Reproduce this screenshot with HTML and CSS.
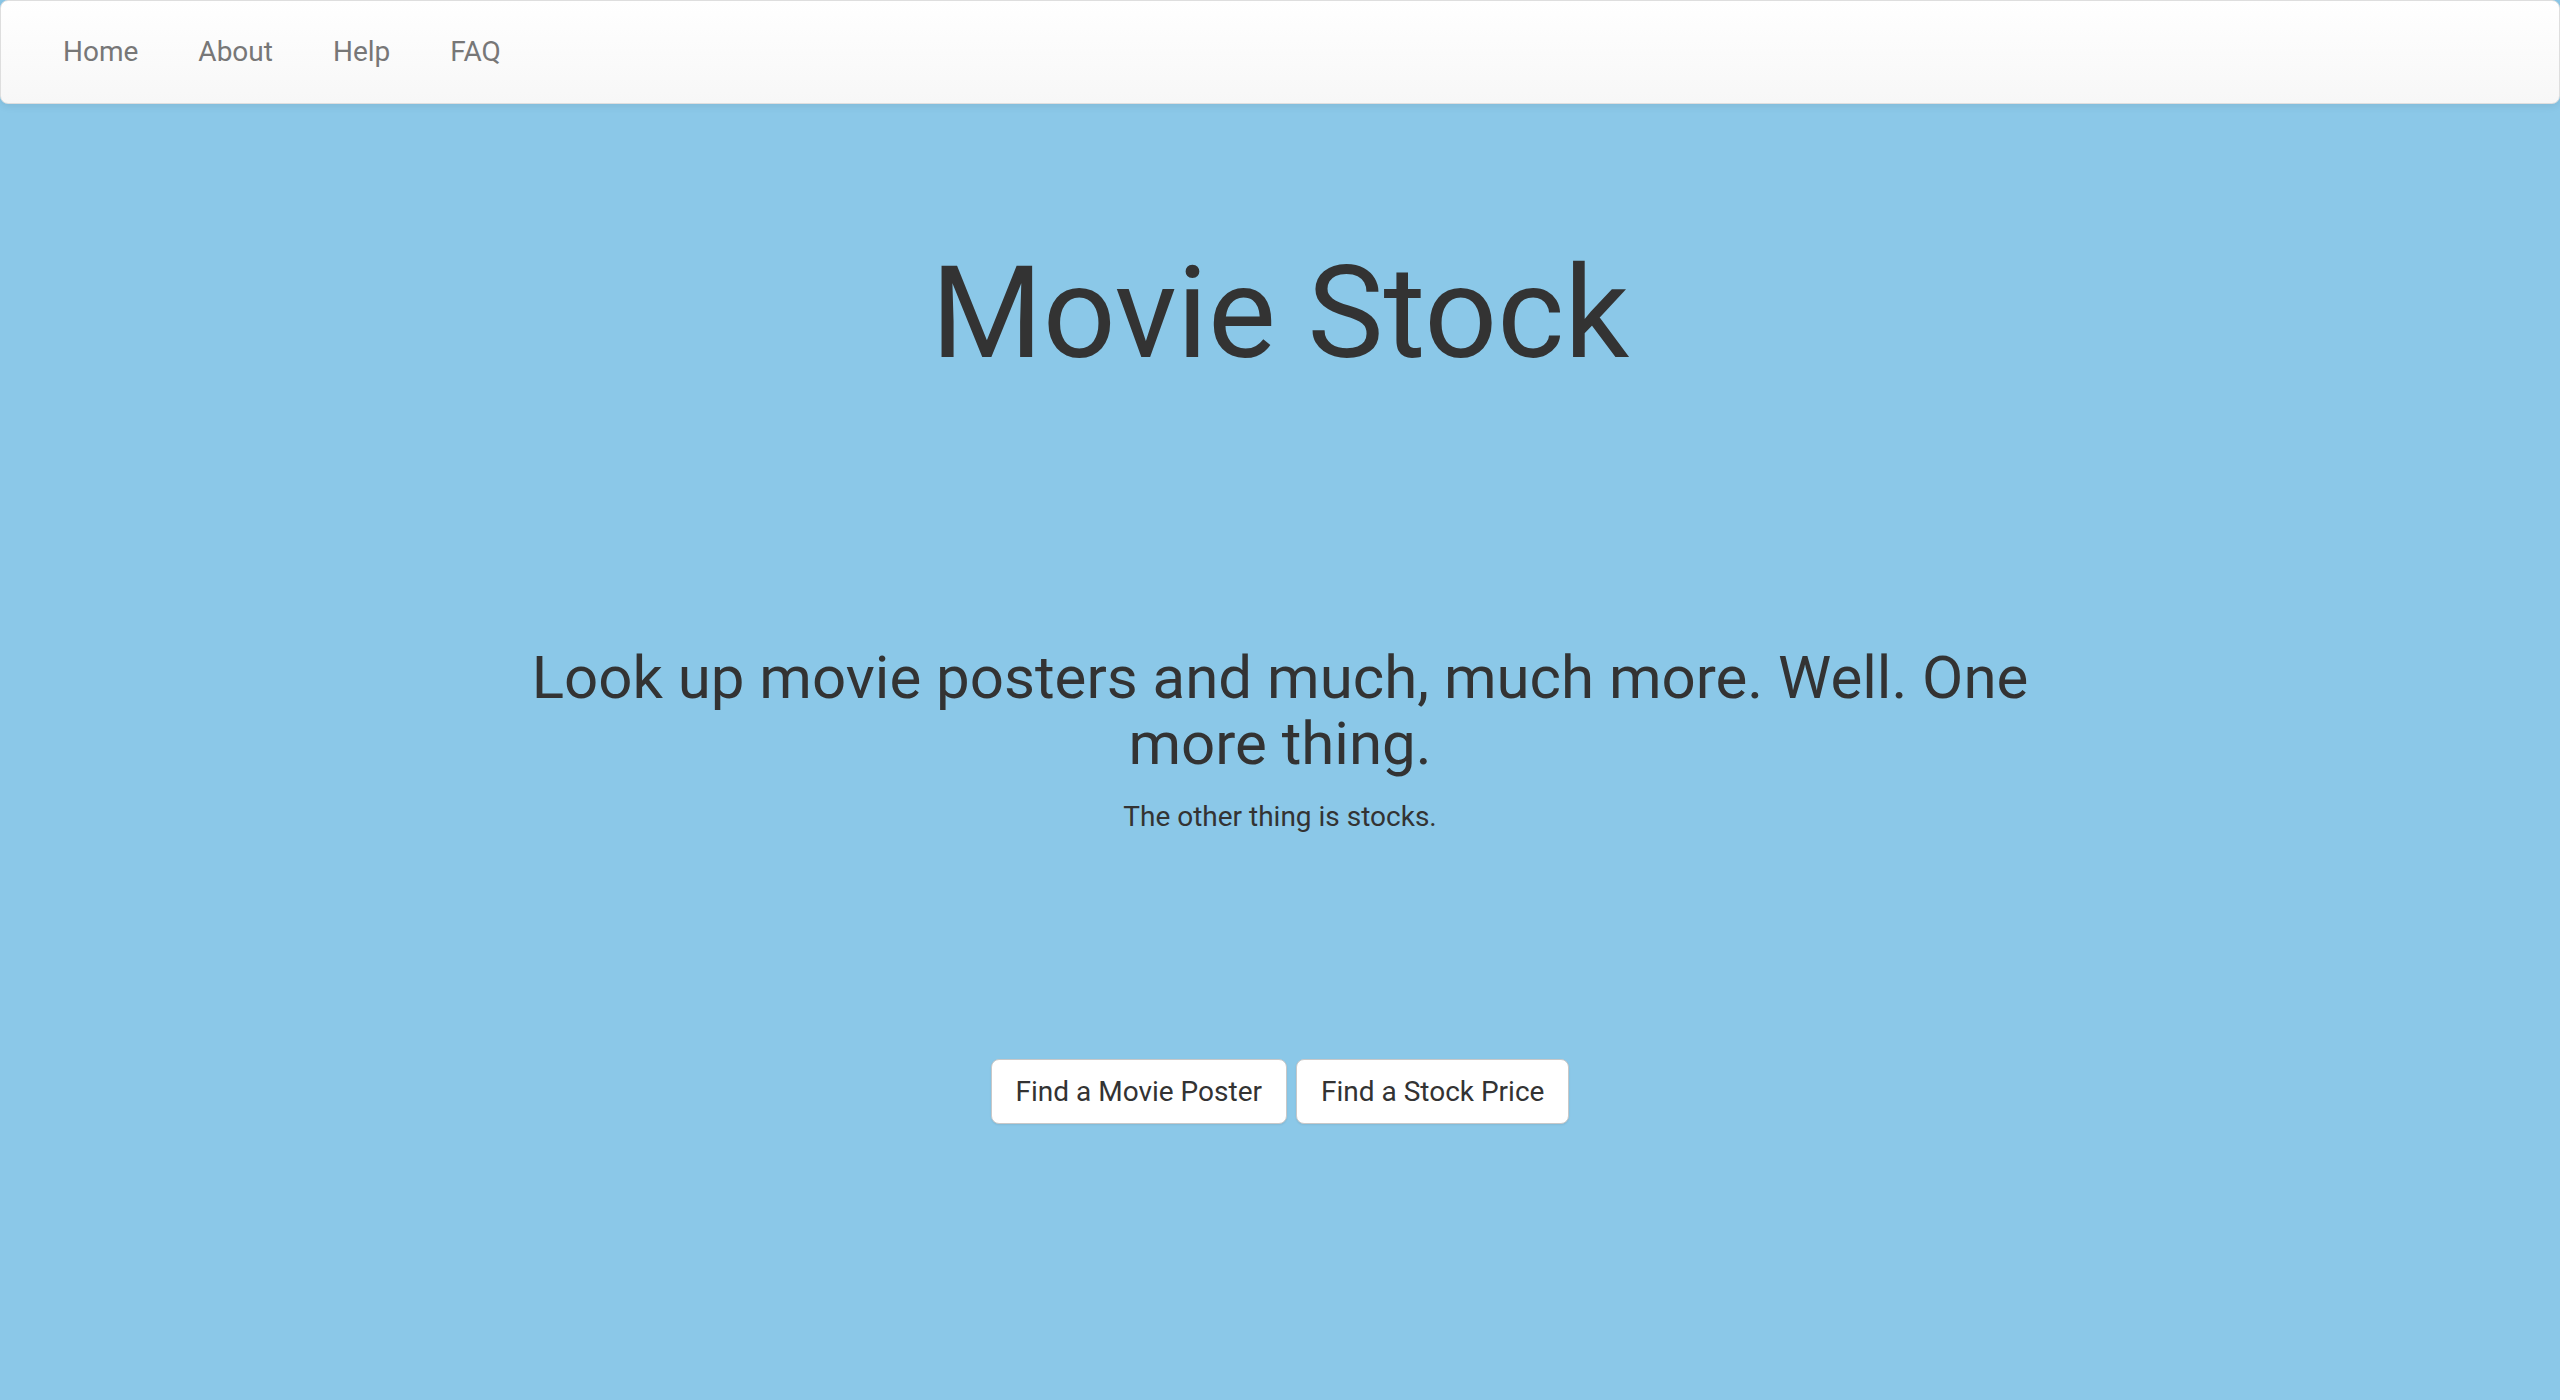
FILE: index.html
```html
<!DOCTYPE html>
<html lang="en">
<head>
<meta charset="utf-8">
<title>Movie Stock</title>
<link rel="stylesheet" href="styles.css">
</head>
<body>
<nav class="navbar">
  <ul class="nav-links">
    <li><a href="#">Home</a></li>
    <li><a href="#">About</a></li>
    <li><a href="#">Help</a></li>
    <li><a href="#">FAQ</a></li>
  </ul>
</nav>
<main class="hero">
  <h1 class="title">Movie Stock</h1>
  <div class="tagline">
    <h2 class="lead">Look up movie posters and much, much more. Well. One more thing.</h2>
    <p class="sub">The other thing is stocks.</p>
  </div>
  <div class="actions">
    <a class="btn" href="#">Find a Movie Poster</a>
    <a class="btn" href="#">Find a Stock Price</a>
  </div>
</main>
</body>
</html>
```
FILE: styles.css
```css
html, body {
  margin: 0;
  padding: 0;
}
body {
  background: #8bc8e8;
  font-family: Roboto, "Liberation Sans", sans-serif;
  color: #333;
  min-height: 1400px;
}
.navbar {
  height: 102px;
  border: 1px solid #dedede;
  border-radius: 8px;
  background: linear-gradient(to bottom, #ffffff 0%, #f7f7f7 100%);
  box-shadow: inset 0 1px 0 rgba(255,255,255,.15), 0 2px 8px rgba(0,0,0,.08);
  padding-left: 32px;
  box-sizing: content-box;
}
.nav-links {
  list-style: none;
  margin: 0;
  padding: 0;
  display: flex;
}
.nav-links a {
  display: block;
  padding: 0 30px;
  line-height: 102px;
  font-size: 28px;
  color: #777;
  text-decoration: none;
}
.hero {
  display: flex;
  flex-direction: column;
  align-items: center;
  text-align: center;
  padding-top: 139px;
}
.title {
  margin: 0;
  font-size: 128px;
  line-height: 141px;
  font-weight: 400;
  color: #333;
}
.tagline {
  margin-top: 261px;
  width: 1560px;
}
.lead {
  margin: 0;
  font-size: 60px;
  line-height: 66px;
  font-weight: 400;
  color: #333;
}
.sub {
  margin: 20px 0 0;
  font-size: 28px;
  line-height: 40px;
}
.actions {
  margin-top: 222px;
  display: flex;
  gap: 9px;
}
.btn {
  display: block;
  padding: 12px 24px;
  font-size: 28px;
  line-height: 39px;
  color: #333;
  text-decoration: none;
  background: #fff;
  border: 1px solid #c8c8c8;
  border-radius: 8px;
  box-shadow: 0 1px 2px rgba(0,0,0,.08);
}
```
